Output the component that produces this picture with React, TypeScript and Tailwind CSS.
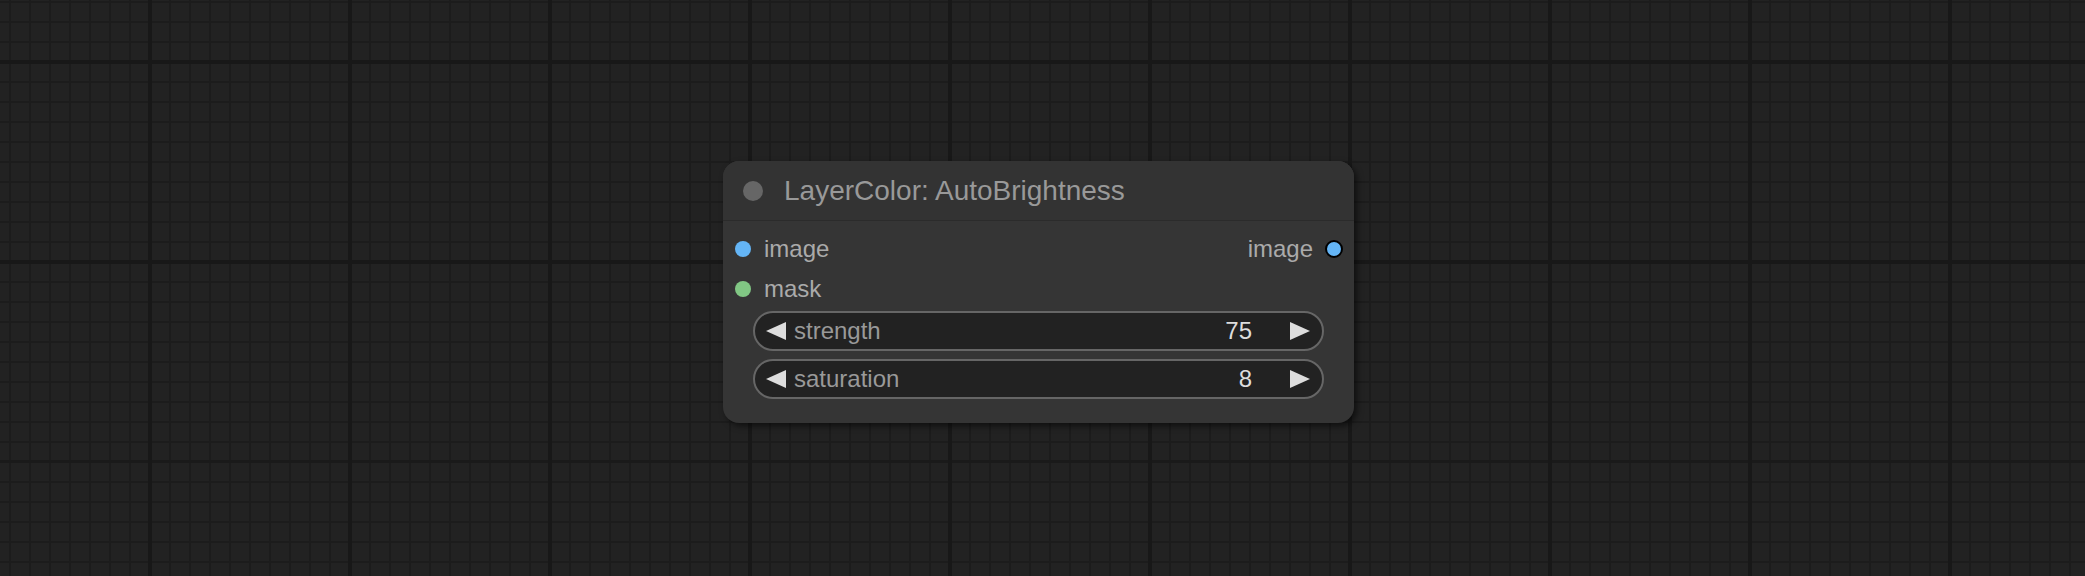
import React from "react";

type Slot = { name: string; color: string };

const inputs: Slot[] = [
  { name: "image", color: "bg-[#64b5f6]" },
  { name: "mask", color: "bg-[#81c784]" },
];

const widgets = [
  { label: "strength", value: "75" },
  { label: "saturation", value: "8" },
];

function Arrow({ dir }: { dir: "left" | "right" }) {
  return (
    <svg width="20" height="18" viewBox="0 0 20 18" className="shrink-0">
      {dir === "left" ? (
        <polygon points="20,0 20,18 0,9" fill="#dddddd" />
      ) : (
        <polygon points="0,0 0,18 20,9" fill="#dddddd" />
      )}
    </svg>
  );
}

function NumberWidget({ label, value }: { label: string; value: string }) {
  return (
    <div className="flex h-[40px] items-center rounded-full border-2 border-[#666666] bg-[#222222] pl-[11px] pr-[12px]">
      <Arrow dir="left" />
      <span className="ml-[8px] text-[24px] leading-none text-[#999999]">{label}</span>
      <span className="ml-auto text-[24px] leading-none text-[#dddddd]">{value}</span>
      <span className="ml-[38px] flex">
        <Arrow dir="right" />
      </span>
    </div>
  );
}

function Node() {
  return (
    <div className="absolute left-[723px] top-[161px] w-[631px] h-[262px] rounded-[16px] bg-[#353535] shadow-[3px_3px_6px_rgba(0,0,0,0.55)] font-['Liberation_Sans',Arial,sans-serif]">
      {/* title */}
      <div className="flex h-[60px] items-center rounded-t-[16px] border-b border-[#2b2b2b] bg-[#333333] pl-[20px]">
        <div className="h-[20px] w-[20px] rounded-full bg-[#666666]" />
        <span className="ml-[21px] text-[28px] leading-none text-[#999999]">
          LayerColor: AutoBrightness
        </span>
      </div>

      {/* slots */}
      <div className="pt-[8px]">
        {inputs.map((s, i) => (
          <div key={s.name} className="flex h-[40px] items-center pl-[12px] pr-[11px]">
            <div className={`h-[16px] w-[16px] rounded-full ${s.color}`} />
            <span className="ml-[13px] text-[24px] leading-none text-[#aaaaaa]">{s.name}</span>
            {i === 0 && (
              <>
                <span className="ml-auto text-[24px] leading-none text-[#aaaaaa]">image</span>
                <div className="ml-[12px] h-[18px] w-[18px] rounded-full border-2 border-black bg-[#64b5f6]" />
              </>
            )}
          </div>
        ))}
      </div>

      {/* widgets */}
      <div className="mt-[2px] flex flex-col gap-[8px] px-[30px]">
        {widgets.map((w) => (
          <NumberWidget key={w.label} label={w.label} value={w.value} />
        ))}
      </div>
    </div>
  );
}

export default function App() {
  return (
    <div
      className="relative h-[576px] w-[2085px] overflow-hidden bg-[#222222] [background-image:linear-gradient(to_right,#181818_4px,transparent_4px),linear-gradient(to_bottom,transparent_60px,#181818_60px,#181818_64px,transparent_64px,transparent_260px,#181818_260px,#181818_264px,transparent_264px,transparent_460px,#1a1a1a_460px,#1a1a1a_463px,transparent_463px),linear-gradient(to_right,#1c1c1c_2px,transparent_2px),linear-gradient(to_bottom,#1c1c1c_2px,transparent_2px)] [background-size:200px_200px,100%_100%,20px_20px,20px_20px] [background-position:148px_0px,0px_0px,9px_1px,9px_1px] [background-repeat:repeat,no-repeat,repeat,repeat]"
    >
      <Node />
    </div>
  );
}
